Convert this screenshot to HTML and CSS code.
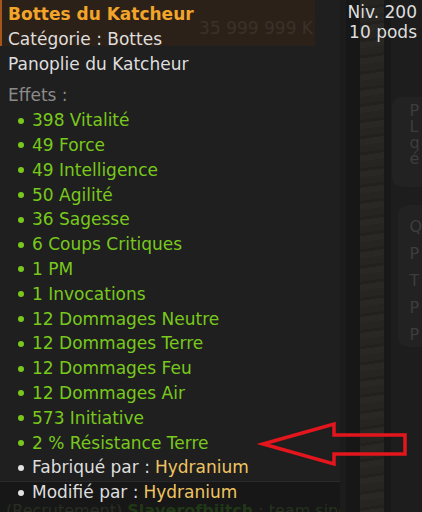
FILE: index.html
```html
<!DOCTYPE html>
<html lang="fr">
<head>
    <meta charset="UTF-8">
    <meta name="viewport" content="width=device-width, initial-scale=1.0">
    <title>Bottes du Katcheur</title>
    <link rel="stylesheet" href="styles.css">
</head>
<body>

    <div class="screen">
        <!-- fond : interface du jeu derrière l'infobulle -->
        <div class="game">
            <div class="game-left">
                <div class="shop-band">
                    <span class="price">35 999 999 K</span>
                </div>
                <div class="shop-body"></div>
                <div class="chat">
                    <span class="chat-chan">(Recrutement)</span>
                    <span class="chat-name">Slaverofbiitch</span>
                    <span class="chat-text">: team sipo pour passer</span>
                </div>
            </div>
            <div class="strip strip-a"></div>
            <div class="strip strip-b"></div>
            <div class="strip strip-tex"></div>
            <div class="strip strip-c"></div>
            <div class="side-panel">
                <div class="side-box box-one">
                    <span>P</span><span>L</span><span>q</span><span>é</span>
                </div>
                <div class="side-box box-two">
                    <span>Q</span><span>P</span><span>T</span><span>P</span><span>P</span>
                </div>
            </div>
        </div>

        <!-- infobulle de l'objet -->
        <div class="tooltip">
            <div class="level">
                <div>Niv. 200</div>
                <div>10 pods</div>
            </div>
            <div class="title">Bottes du Katcheur</div>
            <div class="line">Catégorie : Bottes</div>
            <div class="line">Panoplie du Katcheur</div>
            <div class="effects-label">Effets :</div>
            <ul class="effects">
                <li>398 Vitalité</li>
                <li>49 Force</li>
                <li>49 Intelligence</li>
                <li>50 Agilité</li>
                <li>36 Sagesse</li>
                <li>6 Coups Critiques</li>
                <li>1 PM</li>
                <li>1 Invocations</li>
                <li>12 Dommages Neutre</li>
                <li>12 Dommages Terre</li>
                <li>12 Dommages Feu</li>
                <li>12 Dommages Air</li>
                <li>573 Initiative</li>
                <li>2 % Résistance Terre</li>
            </ul>
            <ul class="crafts">
                <li>Fabriqué par : <span class="crafter">Hydranium</span></li>
                <li>Modifié par : <span class="crafter">Hydranium</span></li>
            </ul>
        </div>

        <svg class="arrow" width="422" height="512" viewBox="0 0 422 512">
            <polygon points="263,444 334,424 334,435 405,435 405,454 334,454 334,464"
                     fill="none" stroke="#e3161d" stroke-width="3.5" stroke-linejoin="miter"/>
        </svg>
    </div>

</body>
</html>
```

FILE: styles.css
```css
body {
    margin: 0;
    background-color: #1e1e1e;
    font-family: "DejaVu Sans", Verdana, sans-serif;
}
.screen {
    position: relative;
    width: 422px;
    height: 512px;
    overflow: hidden;
}

/* fond du jeu */
.game {
    display: flex;
    height: 100%;
}
.game-left {
    width: 340px;
    display: flex;
    flex-direction: column;
    background-color: #1f1f1f;
}
.shop-band {
    width: 313px;
    height: 46px;
    background-color: #2c2118;
    border-left: 2px solid #a4561c;
    display: flex;
    justify-content: flex-end;
    align-items: center;
}
.price {
    color: #3a3129;
    font-size: 17px;
    margin-right: 2px;
    margin-top: 10px;
}
.shop-body {
    flex: 1;
}
.chat {
    height: 31px;
    width: 420px;
    background-color: #171717;
    border-top: 1px solid #2a2a2a;
    font-size: 16px;
    padding: 19px 0 0 6px;
    box-sizing: border-box;
    white-space: nowrap;
    line-height: 20px;
}
.chat-chan {
    color: #282e22;
}
.chat-name {
    color: #203816;
    font-weight: bold;
}
.chat-text {
    color: #24321f;
}
.strip {
    height: 100%;
}
.strip-a {
    width: 6px;
    background-color: #1c1c1c;
}
.strip-b {
    width: 15px;
    background-color: #171717;
}
.strip-tex {
    width: 24px;
    background: repeating-linear-gradient(172deg, #262521 0 7px, #22211e 7px 10px, #292824 10px 16px);
}
.strip-c {
    width: 8px;
    background-color: #181818;
}
.side-panel {
    flex: 1;
    background-color: #1d1d1d;
    padding-top: 97px;
}
.side-box {
    background-color: #222;
    border-radius: 10px 0 0 10px;
    display: flex;
    flex-direction: column;
    color: #3d3d3d;
    font-size: 16px;
    padding-left: 17px;
}
.box-one {
    height: 90px;
    margin-left: 1px;
    line-height: 16px;
    padding-top: 6px;
    box-sizing: border-box;
}
.box-two {
    height: 142px;
    margin-left: 7px;
    margin-top: 18px;
    padding-left: 11px;
    padding-top: 8px;
    box-sizing: border-box;
    line-height: 27px;
}

/* infobulle */
.tooltip {
    position: absolute;
    top: 0;
    left: 0;
    right: 0;
    padding: 2px 0 0 8px;
    font-size: 17px;
    line-height: 24.8px;
    color: #dedede;
}
.level {
    position: absolute;
    top: 2px;
    right: 5px;
    text-align: right;
    line-height: 20px;
}
.title {
    color: #f3a52a;
    font-weight: bold;
}
.effects-label {
    margin-top: 7px;
    color: #8b8b8b;
}
.effects, .crafts {
    list-style: none;
    margin: 0;
    padding: 0;
}
.effects li, .crafts li {
    display: flex;
    align-items: center;
}
.effects li {
    color: #78c91c;
}
.effects li::before, .crafts li::before {
    content: "";
    width: 6px;
    height: 6px;
    border-radius: 50%;
    margin: 0 8px 0 10px;
    background-color: #78c91c;
}
.crafts li::before {
    background-color: #e2e2e2;
}
.crafter {
    color: #efc462;
    margin-left: 5px;
}

.arrow {
    position: absolute;
    top: 0;
    left: 0;
}
```
